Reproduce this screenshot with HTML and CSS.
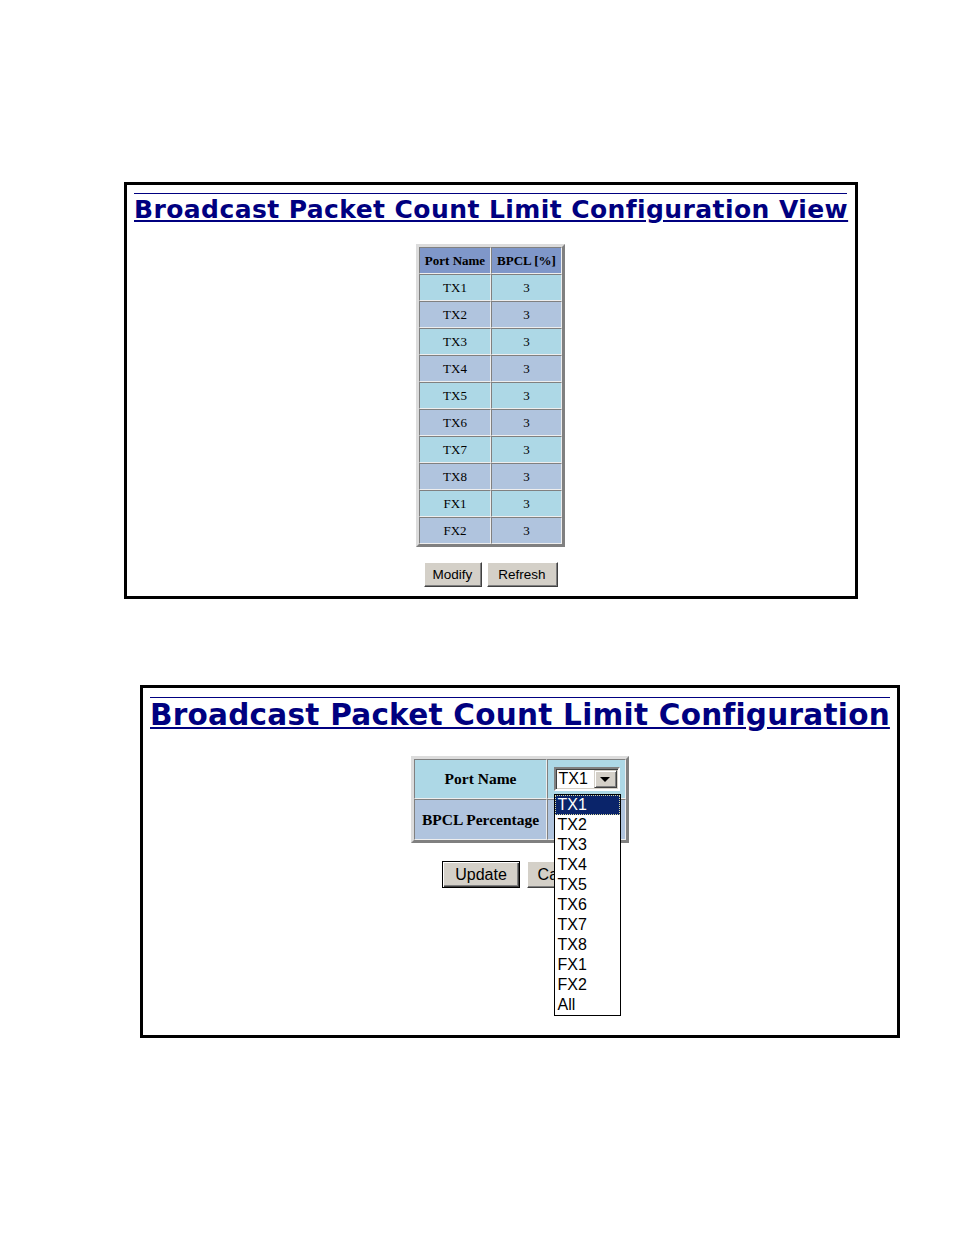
FILE: index.html
```html
<!DOCTYPE html>
<html>
<head>
<meta charset="utf-8">
<title>Broadcast Packet Count Limit Configuration</title>
<link rel="stylesheet" href="styles.css">
</head>
<body>
<div class="panel panel-view">
  <div class="rule"></div>
  <h1 class="title title-view">Broadcast Packet Count Limit Configuration View</h1>
  <table class="grid">
    <tr class="head"><th class="c1">Port Name</th><th class="c2">BPCL [%]</th></tr>
    <tr class="r1"><td>TX1</td><td>3</td></tr>
    <tr class="r2"><td>TX2</td><td>3</td></tr>
    <tr class="r1"><td>TX3</td><td>3</td></tr>
    <tr class="r2"><td>TX4</td><td>3</td></tr>
    <tr class="r1"><td>TX5</td><td>3</td></tr>
    <tr class="r2"><td>TX6</td><td>3</td></tr>
    <tr class="r1"><td>TX7</td><td>3</td></tr>
    <tr class="r2"><td>TX8</td><td>3</td></tr>
    <tr class="r1"><td>FX1</td><td>3</td></tr>
    <tr class="r2"><td>FX2</td><td>3</td></tr>
  </table>
  <div class="actions actions-view">
    <button class="btn btn-modify">Modify</button>
    <button class="btn btn-refresh">Refresh</button>
  </div>
</div>

<div class="panel panel-edit">
  <div class="rule"></div>
  <h1 class="title title-edit">Broadcast Packet Count Limit Configuration</h1>
  <table class="form">
    <tr class="r1">
      <th class="f1 row-a">Port Name</th>
      <td class="f2 row-a">
        <div class="select">
          <span class="select-value">TX1</span>
          <span class="select-arrow"><span class="tri"></span></span>
          <ul class="listbox">
            <li class="sel">TX1</li>
            <li>TX2</li>
            <li>TX3</li>
            <li>TX4</li>
            <li>TX5</li>
            <li>TX6</li>
            <li>TX7</li>
            <li>TX8</li>
            <li>FX1</li>
            <li>FX2</li>
            <li>All</li>
          </ul>
        </div>
      </td>
    </tr>
    <tr class="r2">
      <th class="f1 row-b">BPCL Percentage</th>
      <td class="f2 row-b"></td>
    </tr>
  </table>
  <div class="actions actions-edit">
    <button class="btn btn-default btn-update">Update</button>
    <button class="btn btn-cancel">Cancel</button>
  </div>
</div>
</body>
</html>
```

FILE: styles.css
```css
html, body {
  margin: 0;
  padding: 0;
  background: #fff;
}
body {
  font-family: "Liberation Serif", "Times New Roman", serif;
  color: #000;
}
.panel {
  box-sizing: border-box;
  border: 3px solid #000;
}
.panel-view {
  width: 734px;
  margin: 182px 0 0 124px;
  padding: 8px 8px 9px 7px;
}
.panel-edit {
  width: 760px;
  margin: 86px 0 0 140px;
  padding: 9px 7px 147px 7px;
}
.rule {
  height: 1px;
  background: #000080;
}
.title {
  margin: 0;
  font-family: "DejaVu Sans", Verdana, sans-serif;
  font-weight: bold;
  color: #000080;
  text-decoration: underline;
  white-space: nowrap;
}
.title-view {
  font-size: 25px;
  letter-spacing: 0.42px;
  line-height: 26px;
  margin-top: 3px;
}
.title-edit {
  font-size: 29.5px;
  letter-spacing: 0.25px;
  line-height: 30px;
  margin-top: 2px;
}

/* view table */
.grid, .form {
  border-collapse: separate;
  border-spacing: 0;
  border: 3px solid;
  border-color: #dcdcdc #808080 #808080 #dcdcdc;
}
.grid {
  margin: 21px auto 0;
}
.grid th, .grid td,
.form th, .form td {
  border: 1px solid;
  border-color: #808080 #eeeeee #eeeeee #808080;
  padding: 0;
  text-align: center;
  vertical-align: middle;
}
.grid th, .grid td {
  height: 25px;
  font-size: 13px;
}
.grid .c1 { width: 70px; }
.grid .c2 { width: 69px; }
.grid .head th {
  background: #7f97c9;
  font-weight: bold;
}
.r1 td, .r1 th, .row-a { background: #add8e6; }
.r2 td, .r2 th, .row-b { background: #b0c4de; }

/* buttons */
.actions {
  display: flex;
  justify-content: center;
}
.actions-view {
  gap: 5px;
  margin-top: 15px;
}
.actions-edit {
  gap: 7px;
  margin-top: 18px;
}
.btn {
  box-sizing: border-box;
  margin: 0;
  padding: 0;
  font-family: "Liberation Sans", Arial, sans-serif;
  color: #000;
  background: #d4d0c8;
  border: 1px solid;
  border-color: #ffffff #404040 #404040 #ffffff;
  box-shadow: inset -1px -1px 0 #808080;
}
.btn-modify, .btn-refresh {
  height: 25px;
  font-size: 13.5px;
}
.btn-modify { width: 58px; }
.btn-refresh { width: 71px; }
.btn-update, .btn-cancel {
  height: 27px;
  font-size: 16px;
}
.btn-update { width: 78px; }
.btn-cancel { width: 71px; }
.btn-default {
  border: 1px solid #000;
  box-shadow: inset 1px 1px 0 #ffffff, inset -1px -1px 0 #404040, inset -2px -2px 0 #808080;
}

/* edit table */
.form {
  margin: 26px auto 0;
}
.form th {
  font-size: 15.5px;
  font-weight: bold;
}
.form .f1 { width: 131px; }
.form .f2 { width: 77px; }
.form .r1 th, .form .r1 td { height: 38px; }
.form .r2 th, .form .r2 td { height: 39px; }

.select {
  position: relative;
  box-sizing: border-box;
  width: 66px;
  height: 24px;
  margin: 0 auto;
  display: flex;
  align-items: stretch;
  background: #fff;
  border: 2px solid;
  border-color: #808080 #ffffff #ffffff #808080;
  box-shadow: inset 1px 1px 0 #404040, inset -1px -1px 0 #d4d0c8;
  text-align: left;
  font-family: "Liberation Sans", Arial, sans-serif;
  font-size: 16px;
  font-weight: normal;
}
.select-value {
  flex: 1;
  padding-left: 3px;
  line-height: 20px;
}
.select-arrow {
  box-sizing: border-box;
  width: 23px;
  margin: 1px 1px 1px 0;
  background: #d4d0c8;
  border: 1px solid;
  border-color: #d4d0c8 #404040 #404040 #d4d0c8;
  box-shadow: inset 1px 1px 0 #ffffff, inset -1px -1px 0 #808080;
  display: flex;
  align-items: center;
  justify-content: center;
}
.tri {
  width: 0;
  height: 0;
  border-left: 5px solid transparent;
  border-right: 5px solid transparent;
  border-top: 5px solid #000;
  margin-top: 1px;
}
.listbox {
  position: absolute;
  z-index: 5;
  top: 25px;
  left: -2px;
  box-sizing: border-box;
  width: 67px;
  margin: 0;
  padding: 0;
  list-style: none;
  background: #fff;
  border: 1px solid #000;
}
.listbox li {
  height: 20px;
  line-height: 20px;
  padding-left: 3px;
  color: #000;
}
.listbox li.sel {
  background: #0a246a;
  color: #fff;
  outline: 1px dotted #d8d8a0;
  outline-offset: -1px;
}
```
